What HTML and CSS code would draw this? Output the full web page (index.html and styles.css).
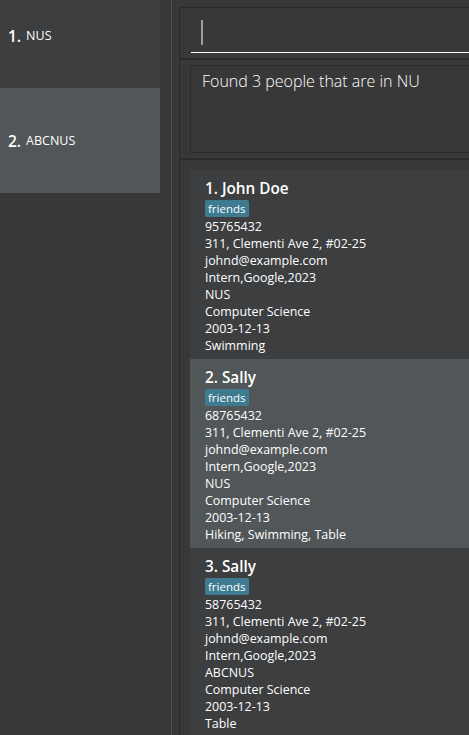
FILE: index.html
```html
<!DOCTYPE html>
<html>
<head>
<meta charset="utf-8">
<link rel="stylesheet" href="styles.css">
</head>
<body>
<div class="app">
  <div class="groups">
    <div class="group even"><span class="gidx">1.</span><span class="gname">NUS</span></div>
    <div class="group odd"><span class="gidx">2.</span><span class="gname">ABCNUS</span></div>
  </div>
  <div class="divider"></div>
  <div class="main">
    <div class="pane command-pane">
      <div class="command-field"><span class="caret"></span></div>
    </div>
    <div class="pane result-pane">
      <div class="result-box">Found 3 people that are in NU</div>
    </div>
    <div class="pane list-pane">
      <div class="card even">
        <div class="name">1. John Doe</div>
        <div class="tags"><span class="tag">friends</span></div>
        <div class="line">95765432</div>
        <div class="line">311, Clementi Ave 2, #02-25</div>
        <div class="line">johnd@example.com</div>
        <div class="line">Intern,Google,2023</div>
        <div class="line">NUS</div>
        <div class="line">Computer Science</div>
        <div class="line">2003-12-13</div>
        <div class="line">Swimming</div>
      </div>
      <div class="card odd">
        <div class="name">2. Sally</div>
        <div class="tags"><span class="tag">friends</span></div>
        <div class="line">68765432</div>
        <div class="line">311, Clementi Ave 2, #02-25</div>
        <div class="line">johnd@example.com</div>
        <div class="line">Intern,Google,2023</div>
        <div class="line">NUS</div>
        <div class="line">Computer Science</div>
        <div class="line">2003-12-13</div>
        <div class="line">Hiking, Swimming, Table</div>
      </div>
      <div class="card even">
        <div class="name">3. Sally</div>
        <div class="tags"><span class="tag">friends</span></div>
        <div class="line">58765432</div>
        <div class="line">311, Clementi Ave 2, #02-25</div>
        <div class="line">johnd@example.com</div>
        <div class="line">Intern,Google,2023</div>
        <div class="line">ABCNUS</div>
        <div class="line">Computer Science</div>
        <div class="line">2003-12-13</div>
        <div class="line">Table</div>
      </div>
    </div>
  </div>
</div>
</body>
</html>
```
FILE: styles.css
```css
html, body {
  margin: 0;
  padding: 0;
  background: #383838;
  overflow: hidden;
  font-family: "Open Sans", "Noto Sans", sans-serif;
  color: #ffffff;
}

.app {
  display: flex;
  width: 700px;
  height: 735px;
}

.groups {
  width: 160px;
  flex: none;
  display: flex;
  flex-direction: column;
  margin-top: -17px;
}

.group {
  height: 105px;
  display: flex;
  align-items: center;
  padding-left: 8px;
  gap: 5px;
  box-sizing: border-box;
}

.group.even { background: #3c3e3f; }
.group.odd { background: #515658; }

.gidx {
  font-size: 15.5px;
  font-weight: 600;
}

.gname {
  font-size: 12.5px;
}

.divider {
  width: 12px;
  flex: none;
  box-sizing: border-box;
  border-right: 1px solid #4f4f4f;
}

.main {
  width: 420px;
  flex: none;
  padding: 7px 0 0 7px;
  display: flex;
  flex-direction: column;
}

.pane {
  border: 1px solid #2b2b2b;
  border-right: none;
  background: #383838;
}

.command-pane {
  padding: 0 0 5px 11px;
}

.command-field {
  height: 45px;
  box-sizing: border-box;
  border-bottom: 1px solid #ffffff;
  padding: 12px 0 0 10px;
}

.caret {
  display: block;
  width: 2px;
  height: 25px;
  background: #9e9e9e;
}

.result-pane {
  border-top: 1px solid #2b2b2b;
  padding: 5px 0 5px 10px;
}

.result-box {
  height: 88px;
  box-sizing: border-box;
  border: 1px solid #2b2b2b;
  border-right: none;
  padding: 4px 0 0 11px;
  font-size: 16px;
  font-weight: 300;
  line-height: 23px;
}

.list-pane {
  flex: 1;
  padding: 10px 0 0 10px;
  border-bottom: none;
}

.card {
  height: 189px;
  box-sizing: border-box;
  padding: 7px 15px 0 15px;
}

.card.even { background: #3c3e3f; }
.card.odd { background: #515658; }

.name {
  font-size: 15.3px;
  font-weight: 600;
  line-height: 22px;
}

.tags {
  margin-top: 1px;
  margin-bottom: 1px;
  height: 17px;
  display: flex;
}

.tag {
  background: #3e7b91;
  color: #ffffff;
  font-size: 11.5px;
  line-height: 15px;
  padding: 1px 3px;
  border-radius: 2px;
}

.line {
  font-size: 12.45px;
  line-height: 17px;
}
```
